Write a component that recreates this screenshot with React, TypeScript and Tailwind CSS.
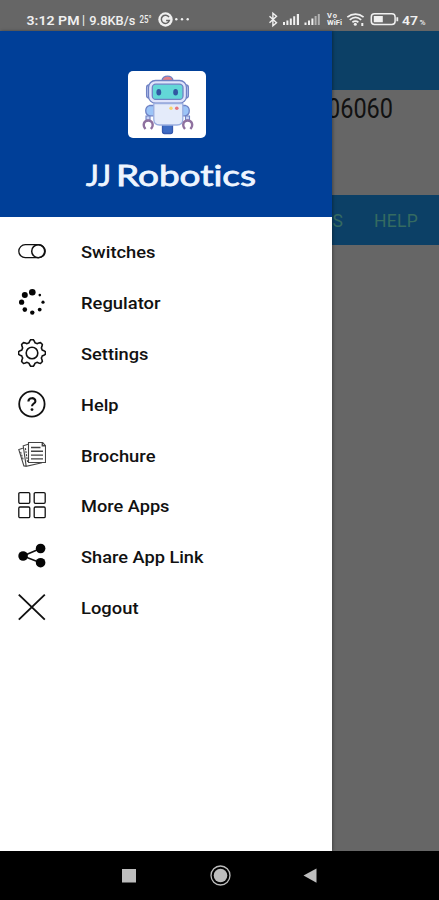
import type { ReactNode } from 'react';

const gearPoints = Array.from({ length: 64 }, (_, i) => {
  const a = (i / 64) * Math.PI * 2;
  const wave = Math.max(-1, Math.min(1, Math.cos(a * 8) * 1.7));
  const r = 12 + wave * 1.4;
  return `${(14 + r * Math.sin(a)).toFixed(2)},${(14 - r * Math.cos(a)).toFixed(2)}`;
}).join(' ');

function Icon({ children }: { children: ReactNode }) {
  return (
    <svg className="h-7 w-7 shrink-0" viewBox="0 0 28 28" fill="none" stroke="#111" strokeWidth="1.6">
      {children}
    </svg>
  );
}

const items: { label: string; width: number; icon: ReactNode }[] = [
  {
    label: 'Switches',
    width: 74.5,
    icon: (
      <Icon>
        <rect x="0.8" y="7.7" width="26.4" height="13" rx="6.5" strokeWidth="1.3" />
        <circle cx="20.2" cy="14.2" r="6.5" strokeWidth="1.5" />
      </Icon>
    ),
  },
  {
    label: 'Regulator',
    width: 79.5,
    icon: (
      <Icon>
        <g fill="#050505" stroke="none">
          <circle cx="14.3" cy="4.2" r="3.3" />
          <circle cx="6.8" cy="7.1" r="3" />
          <circle cx="3.6" cy="14.2" r="2.6" />
          <circle cx="6.8" cy="21.6" r="2.3" />
          <circle cx="14.3" cy="24.6" r="2.2" />
          <circle cx="21.7" cy="21.6" r="1.9" />
          <circle cx="25" cy="14.2" r="1.6" />
          <circle cx="21.8" cy="7.1" r="1.3" />
        </g>
      </Icon>
    ),
  },
  {
    label: 'Settings',
    width: 67.5,
    icon: (
      <Icon>
        <polygon points={gearPoints} strokeLinejoin="round" />
        <circle cx="14" cy="14" r="5.8" />
      </Icon>
    ),
  },
  {
    label: 'Help',
    width: 37.5,
    icon: (
      <Icon>
        <circle cx="13.9" cy="14" r="12.7" strokeWidth="1.8" />
        <path d="M10.4 11.6c0-4.6 7-4.4 7-.4 0 2.4-3.4 2.3-3.4 5.1" strokeWidth="2.1" />
        <circle cx="14" cy="19.6" r="1.4" fill="#111" stroke="none" />
      </Icon>
    ),
  },
  {
    label: 'Brochure',
    width: 74.5,
    icon: (
      <Icon>
        <g strokeWidth="1.1" stroke="#444">
          <path d="M10.5 1.5h14.2l2.8 3.3v16.7H10.5z" />
          <path d="M24.3 1.5v3.3h3.2M13 6.5h9.5M13 10.3h12M13 14.1h12M13 17.9h12" strokeWidth="1.4" />
          <path d="M10.2 3.2 5.2 4.8l3 20.6L24 21.8M4.8 7.2.8 8.6l5.1 16.3 2.2.4" />
          <path d="m2.6 10.8 2.8 8.4M7.4 7.2l2.2 14.2" strokeDasharray="2 1" />
        </g>
      </Icon>
    ),
  },
  {
    label: 'More Apps',
    width: 88.5,
    icon: (
      <Icon>
        <g strokeWidth="1.3">
          <rect x="0.8" y="1.6" width="11" height="10.7" rx="1.2" />
          <rect x="16.2" y="1.6" width="11" height="10.7" rx="1.2" />
          <rect x="0.8" y="16" width="11" height="10.7" rx="1.2" />
          <rect x="16.2" y="16" width="11" height="10.7" rx="1.2" />
        </g>
      </Icon>
    ),
  },
  {
    label: 'Share App Link',
    width: 122.5,
    icon: (
      <Icon>
        <path d="M22.5 6.5 5 14l17.5 6.7" strokeWidth="1.6" />
        <g fill="#050505" stroke="none">
          <circle cx="5.1" cy="14" r="4.8" />
          <circle cx="22.6" cy="6.5" r="4.8" />
          <circle cx="22.6" cy="20.7" r="4.8" />
        </g>
      </Icon>
    ),
  },
  {
    label: 'Logout',
    width: 57.5,
    icon: (
      <Icon>
        <path d="m0.8 1.6 26 25M26.8 1.6l-26 25" strokeWidth="1.9" />
      </Icon>
    ),
  },
];

function Robot() {
  return (
    <svg className="h-[67px] w-[78px]" viewBox="0 0 78 67" fill="none" stroke="#6f82c4" strokeWidth="1.3">
      <path d="M34 10c0-6.500 11-6.500 11 0z" fill="#e28087" />
      <rect x="18.600" y="14" width="41.800" height="13" rx="2.500" fill="#c5cff5" />
      <rect x="20.500" y="9.500" width="38" height="22.700" rx="7" fill="#dfe4fb" />
      <rect x="24.300" y="13.200" width="30.700" height="15.200" rx="3.500" fill="#63d7d7" />
      <g fill="#3157a2" stroke="none">
        <ellipse cx="30.800" cy="21.300" rx="2.400" ry="3.300" />
        <ellipse cx="47.600" cy="21.300" rx="2.400" ry="3.300" />
      </g>
      <path d="M34.500 53h10v7.500a2 2 0 0 1-2 2h-6a2 2 0 0 1-2-2z" fill="#3f6cc4" stroke="#3659ae" />
      <path d="M27 34.500h-5.500a5.400 5.400 0 0 0 0 10.300H27zM52 34.500h5.500a5.400 5.400 0 0 1 0 10.300H52z" fill="#9cc4f7" />
      <path d="M25.800 32.700h29v15.500q0 5.800-5.800 5.800H31.600q-5.800 0-5.800-5.800z" fill="#e4ebfa" stroke="#9aaee0" />
      <circle cx="43" cy="37.200" r="1.700" fill="#f7d56e" stroke="none" />
      <circle cx="48.800" cy="37.200" r="1.800" fill="#e6777d" stroke="none" />
      <path d="M18 45h4v4h-4zM57.500 45h4v4h-4z" fill="#c9d4f5" strokeWidth="1.1" />
      <path
        d="M17.500 58c-3.500-4-1.500-8.500 2.700-8.500s6.200 4.500 2.700 8.500M57 58c-3.500-4-1.500-8.500 2.700-8.500s6.200 4.500 2.700 8.500"
        stroke="#8f719f"
        strokeWidth="2.300"
      />
    </svg>
  );
}

function StatusBar() {
  return (
    <header className="h-[31px] shrink-0 bg-[#666]">
      <svg className="h-[31px] w-[439px]" viewBox="0 0 439 31" fill="#f0f0f0">
        <g fontFamily="Roboto, sans-serif" fontWeight="500">
          <text x="26.5" y="24.6" fontSize="13.4" fontWeight="600" textLength="53" lengthAdjust="spacingAndGlyphs">3:12 PM</text>
          <text x="82" y="24" fontSize="12">|</text>
          <text x="89.3" y="24.6" fontSize="13" textLength="46" lengthAdjust="spacingAndGlyphs">9.8KB/s</text>
          <text x="139.5" y="23.2" fontSize="10" textLength="12" lengthAdjust="spacingAndGlyphs">25°</text>
          <text x="327" y="18.4" fontSize="7.5" textLength="10" fontWeight="700">Vo</text>
          <text x="327" y="25" fontSize="7" textLength="15" fontWeight="700" lengthAdjust="spacingAndGlyphs">WiFi</text>
          <text x="402" y="24.6" fontSize="13.5" textLength="16" fontWeight="600" lengthAdjust="spacingAndGlyphs">47</text>
          <text x="419.5" y="24.5" fontSize="8" textLength="6" lengthAdjust="spacingAndGlyphs">%</text>
        </g>
        <circle cx="165.5" cy="19.5" r="7.2" />
        <path d="M169 17.2a4.1 4.1 0 1 0 .4 3.2h-3.3" fill="none" stroke="#666" strokeWidth="1.5" />
        <circle cx="176.3" cy="19.2" r="1.2" />
        <circle cx="182" cy="19.2" r="1.2" />
        <circle cx="187.7" cy="19.2" r="1.2" />
        <path d="m269.5 16.2 7 6.5-3.6 3V13.2l3.6 3-7 6.5" fill="none" stroke="#f0f0f0" strokeWidth="1.4" />
        <path d="M283 22h2v3h-2zM286.4 20.5h2V25h-2zM289.8 18.5h2V25h-2zM293.2 16.3h2V25h-2zM296.8 14h2.2v11h-2.2z" />
        <path d="M304.5 22.5h2V25h-2zM308 20.5h2V25h-2zM311.4 18.5h2V25h-2z" />
        <path d="M314.6 16h2v9h-2zM317.8 14h2v11h-2z" opacity=".55" />
        <g fill="none" stroke="#f0f0f0" strokeWidth="1.7">
          <path d="M347.3 17.2c5-4 11.5-4 16.3 0M349.7 19.8c3.7-3 8-3 11.5 0M352.4 22.3c2-1.5 4-1.5 6 0" />
          <rect x="371.3" y="13.7" width="23.8" height="10.8" rx="3.2" strokeWidth="1.5" />
        </g>
        <circle cx="355.3" cy="24.2" r="1.5" />
        <path d="M361.3 23h2v3h-2zM373.8 16h9v6.3h-9zM396.4 17.2h1.8v4h-1.8z" />
      </svg>
    </header>
  );
}

export default function App() {
  return (
    <div className="flex h-[900px] w-[439px] flex-col overflow-hidden bg-[#666] font-[Roboto,sans-serif]">
      <StatusBar />
      <main className="flex h-[820px] shrink-0">
        <aside className="z-10 w-[331.5px] shrink-0 bg-white shadow-[1px_0_3px_rgba(0,0,0,0.35)]">
          <div className="flex h-[186px] flex-col items-center bg-[#003f98] pt-10">
            <div className="ml-[3px] h-[67px] w-[78px] overflow-hidden rounded-[5px] bg-white">
              <Robot />
            </div>
            <svg className="mt-4 ml-2 h-[40px] w-[180px] [font-variant-ligatures:none]" viewBox="0 0 180 40">
              <g fill="#eef5ff" stroke="#eef5ff" strokeWidth="0.8" fontFamily="Lato, sans-serif" fontSize="29.500" fontWeight="400">
                <text x="6" y="31.800" textLength="25" lengthAdjust="spacingAndGlyphs">JJ</text>
                <text x="36" y="31.800" textLength="140" lengthAdjust="spacingAndGlyphs">Robotics</text>
              </g>
            </svg>
          </div>
          <nav className="flex flex-col pt-[9px]">
            {items.map((item) => (
              <a key={item.label} className="flex h-[50.8px] items-center gap-[35px] pl-[18px]">
                {item.icon}
                <svg className="h-6 w-[140px]" viewBox="0 0 140 24">
                  <text x="0" y="18.7" fill="#111" fontFamily="Roboto, sans-serif" fontSize="17.4" fontWeight="500" textLength={item.width} lengthAdjust="spacingAndGlyphs">
                    {item.label}
                  </text>
                </svg>
              </a>
            ))}
          </nav>
        </aside>
        <section className="flex min-w-0 flex-1 flex-col bg-[#666]">
          <div className="h-[59px] bg-[#0c4066]" />
          <div className="flex h-[105px] justify-end pr-[45px]">
            <svg className="h-10 w-[68px] shrink-0" viewBox="0 0 68 40">
              <text x="1" y="28.3" fill="#111" fontFamily="Roboto, sans-serif" fontSize="27.5" textLength="66" lengthAdjust="spacingAndGlyphs">
                06060
              </text>
            </svg>
          </div>
          <div className="flex h-[50px] items-center justify-end gap-[31px] bg-[#0c4066] pr-[21px] text-[17.5px] text-[#356b61]">
            <span className="h-[25px]">S</span>
            <span className="h-[25px] tracking-[0.3px]">HELP</span>
          </div>
        </section>
      </main>
      <footer className="h-[49px] shrink-0 bg-black">
        <svg className="h-[49px] w-[439px]" viewBox="0 0 439 49" fill="#bdbdbd">
          <rect x="122" y="18" width="14" height="13.5" />
          <circle cx="220.5" cy="24.5" r="6.8" />
          <circle cx="220.5" cy="24.5" r="9.5" fill="none" stroke="#bdbdbd" strokeWidth="1.3" />
          <path d="M303.5 24.5 316.5 17.5v14.3z" />
        </svg>
      </footer>
    </div>
  );
}
